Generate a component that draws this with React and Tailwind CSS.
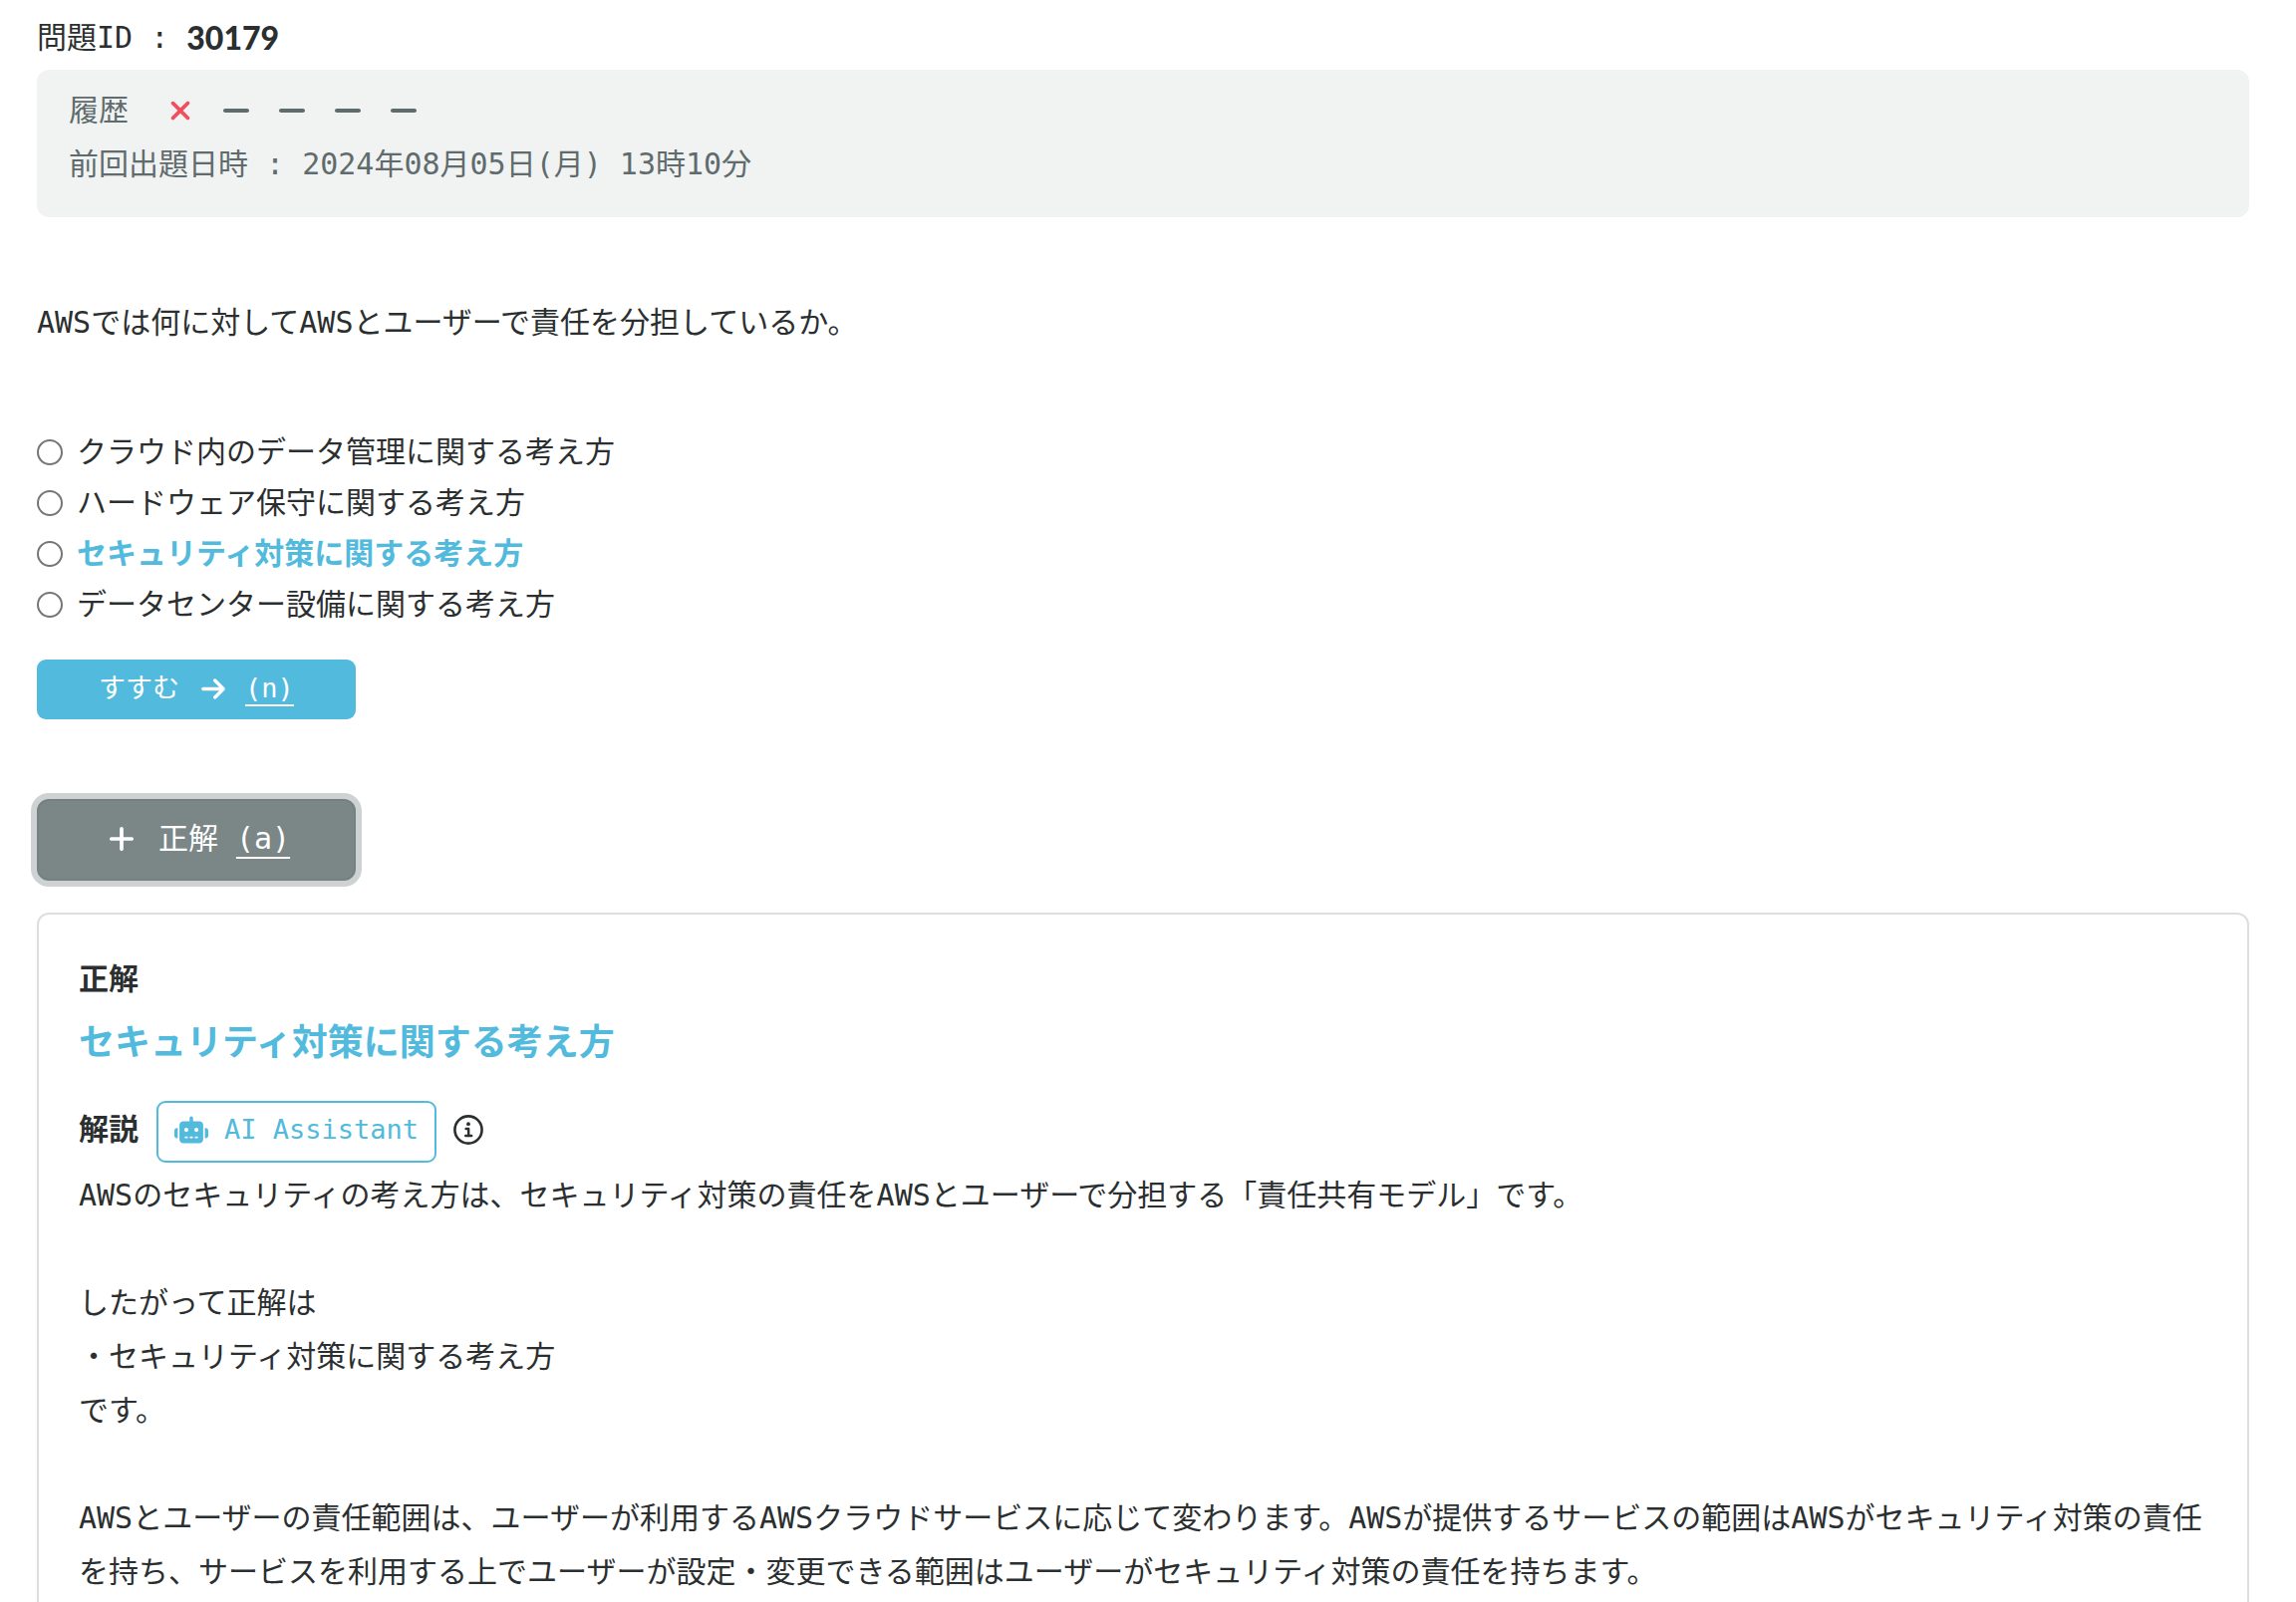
import { FaRobot, FaArrowRight, FaPlus, FaMinus, FaXmark } from "react-icons/fa6";

const options = [
  { id: "a", label: "クラウド内のデータ管理に関する考え方" },
  { id: "b", label: "ハードウェア保守に関する考え方" },
  { id: "c", label: "セキュリティ対策に関する考え方", correct: true },
  { id: "d", label: "データセンター設備に関する考え方" },
];

function InfoIcon() {
  return (
    <svg viewBox="0 0 30 30" className="size-[30px]" fill="none" aria-hidden="true">
      <circle cx="15" cy="15" r="13.6" stroke="currentColor" strokeWidth="2.6" />
      <circle cx="15" cy="9.2" r="1.9" fill="currentColor" />
      <path d="M12.6 14h2.6v6.6M12.2 21h6" stroke="currentColor" strokeWidth="2.4" strokeLinecap="round" strokeLinejoin="round" />
    </svg>
  );
}

export default function App() {
  return (
    <main
      lang="ja"
      className="h-screen overflow-hidden bg-white pt-[11px] pr-[47px] pl-[37px] font-['DejaVu_Sans_Mono','Noto_Sans_CJK_JP',monospace] text-[30px] leading-[54px] text-[#2b2f30]"
    >
      <div className="flex h-[59px] items-start whitespace-pre">
        <span>問題ID : </span>
        <strong className="font-['Lato',sans-serif] text-[32px] font-black">30179</strong>
      </div>

      <section className="h-[148px] rounded-xl bg-[#f1f3f3] px-8 pt-[14px] text-[#5f6b6c]">
        <div className="flex items-center">
          <span className="mr-[38px]">履歴</span>
          <div className="flex items-center gap-7">
            <FaXmark className="h-[30px] w-7 text-[#ef4f5f]" />
            <FaMinus className="h-8 w-7" />
            <FaMinus className="h-8 w-7" />
            <FaMinus className="h-8 w-7" />
            <FaMinus className="h-8 w-7" />
          </div>
        </div>
        <p>前回出題日時 : 2024年08月05日(月) 13時10分</p>
      </section>

      <p className="mt-[79px]">AWSでは何に対してAWSとユーザーで責任を分担しているか。</p>

      <fieldset className="mt-[77px]">
        {options.map((o) => (
          <div key={o.id} className="flex h-[51px] items-center gap-[14px]">
            <input
              type="radio"
              name="answer"
              id={o.id}
              className="size-[26px] appearance-none rounded-full border-2 border-[#767676] bg-white"
            />
            <label htmlFor={o.id} className={o.correct ? "font-bold text-[#52badc]" : ""}>
              {o.label}
            </label>
          </div>
        ))}
      </fieldset>

      <button
        type="button"
        className="mt-[30px] flex h-[60px] w-80 items-center justify-center rounded-[9px] bg-[#52badc] pb-[2px] text-[27px] leading-[40px] text-white"
      >
        <span>すすむ</span>
        <FaArrowRight className="mr-5 ml-[22px] h-[27px] w-6" />
        <span className="underline decoration-2 underline-offset-[7px]">(n)</span>
      </button>

      <button
        type="button"
        className="mt-20 flex h-[82px] w-80 items-center justify-center rounded-xl border-2 border-[#748082] bg-[#7b8687] pb-[2px] pl-[6px] text-white ring-6 ring-[#ced2d3]"
      >
        <FaPlus className="mr-6 h-[30px] w-[26px]" />
        <span className="mr-[18px]">正解</span>
        <span className="underline decoration-2 underline-offset-8">(a)</span>
      </button>

      <section className="mt-8 rounded-xl border-2 border-[#dddfdf] px-10 pt-[38px] pb-10">
        <h2 className="font-bold">正解</h2>
        <p className="mt-1 text-[36px] leading-[65px] font-bold text-[#52badc]">
          セキュリティ対策に関する考え方
        </p>
        <div className="mt-[26px] flex h-[62px] items-center">
          <h2 className="pb-1 font-bold">解説</h2>
          <button
            type="button"
            className="ml-[18px] flex h-[62px] items-center gap-4 rounded-[9px] border-2 border-[#52badc] px-4 pb-1 text-[27px] leading-[40px] text-[#52badc]"
          >
            <FaRobot className="h-[34px] w-[34px]" />
            AI Assistant
          </button>
          <button type="button" aria-label="情報" className="ml-[17px] pb-1">
            <InfoIcon />
          </button>
        </div>
        <div className="mt-[6px]">
          <p>AWSのセキュリティの考え方は、セキュリティ対策の責任をAWSとユーザーで分担する「責任共有モデル」です。</p>
          <p className="mt-[54px]">
            したがって正解は
            <br />
            ・セキュリティ対策に関する考え方
            <br />
            です。
          </p>
          <p className="mt-[54px]">
            AWSとユーザーの責任範囲は、ユーザーが利用するAWSクラウドサービスに応じて変わります。AWSが提供するサービスの範囲はAWSがセキュリティ対策の責任を持ち、サービスを利用する上でユーザーが設定・変更できる範囲はユーザーがセキュリティ対策の責任を持ちます。
          </p>
        </div>
      </section>
    </main>
  );
}
